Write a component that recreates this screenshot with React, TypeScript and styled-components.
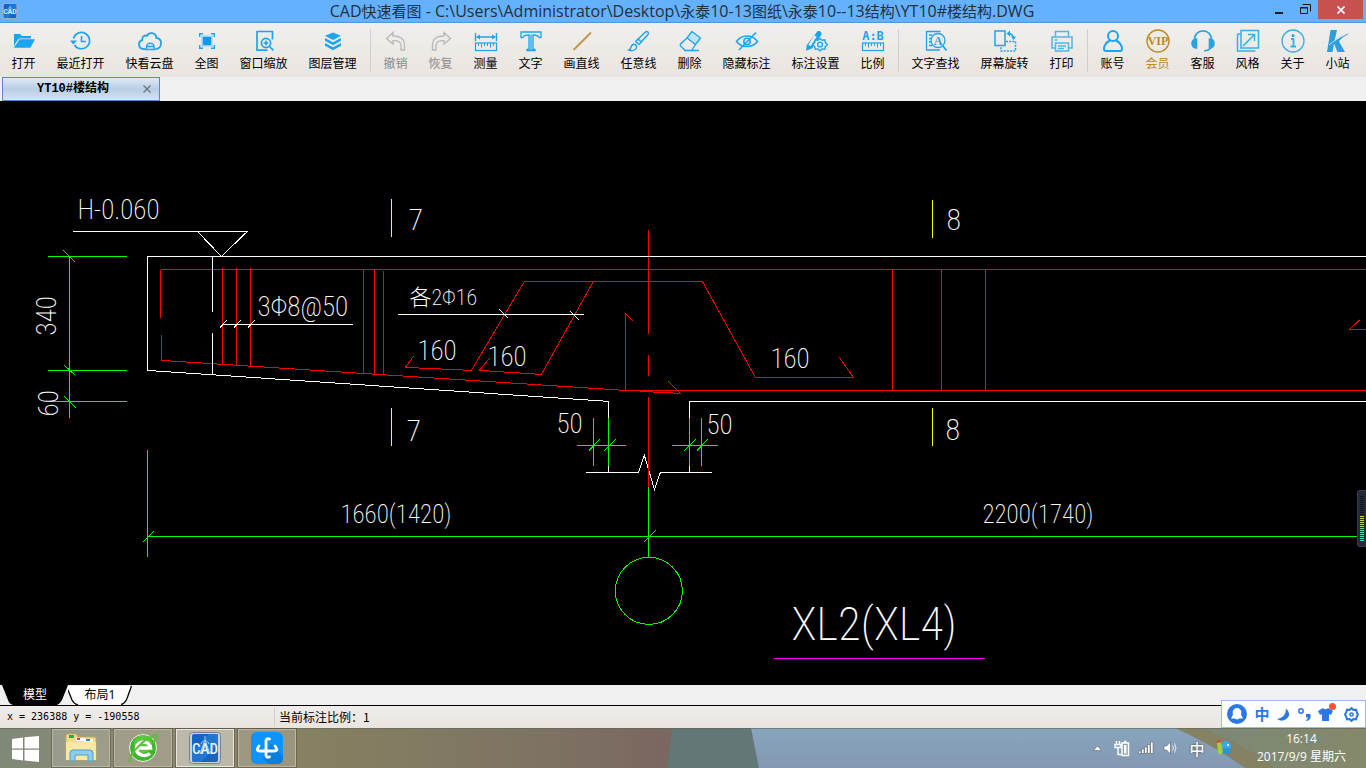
import React from 'react';
import styled, { createGlobalStyle } from 'styled-components';

const BLUE = '#1ba5ee';
const GOLD = '#c08a22';
const CJK = "'Noto Sans CJK SC', sans-serif";

const GlobalStyle = createGlobalStyle`
  *, *::before, *::after { box-sizing: border-box; }
  body { margin: 0; font-family: ${CJK}; font-size: 12px; color: #000; }
  button { margin: 0; padding: 0; border: 0; background: none; color: inherit; font: inherit; cursor: pointer; }
`;

const Desktop = styled.div`
  position: relative;
  display: flex;
  flex-direction: column;
  min-height: 100vh;
  overflow: hidden;
`;

/* ---------- title bar ---------- */

const TitleBar = styled.header`
  display: flex;
  justify-content: space-between;
  height: 23px;
  padding: 0 3px 0 2px;
  background: #64b1ff;
  border-bottom: 1px solid #4b97de;
`;

const TitleSide = styled.div`
  flex: 0 0 96px;
  display: flex;
  padding-top: 3px;
`;

const WindowControls = styled(TitleSide)`
  padding: 0;
  justify-content: flex-end;
`;

const Title = styled.h1`
  flex: 1;
  margin: 0;
  font-family: 'Open Sans', ${CJK};
  font-size: 16px;
  font-weight: 400;
  line-height: 22px;
  text-align: center;
  white-space: nowrap;
  color: #22303c;
`;

const Han = styled.span`
  font-size: 15px;
`;

const WindowButton = styled.button<{ $close?: boolean }>`
  width: ${p => (p.$close ? 45 : 26)}px;
  height: 19px;
  display: flex;
  align-items: center;
  justify-content: center;
  background: ${p => (p.$close ? '#c75050' : 'transparent')};
`;

/* ---------- toolbar ---------- */

const Toolbar = styled.nav`
  display: flex;
  height: 54px;
  padding: 6px 0 0 1px;
  background: linear-gradient(#f0efec, #eae4e0);
`;

const widths: Record<number, number> = { 2: 45, 3: 57, 4: 69 };

const ToolButton = styled.button<{ $chars: number; $color?: string }>`
  flex: 0 0 ${p => widths[p.$chars]}px;
  display: flex;
  flex-direction: column;
  align-items: center;
  align-self: flex-start;
  gap: 2px;
  color: ${p => p.$color || '#000'};
  line-height: 16px;
  white-space: nowrap;
`;

const Separator = styled.i`
  width: 1px;
  height: 43px;
  margin: 0 2px 0 3px;
  background: #cfcfd0;
`;

/* ---------- document tabs ---------- */

const DocTabs = styled.div`
  display: flex;
  height: 24px;
  padding-left: 2px;
  background: #f0f0f0;
`;

const DocTab = styled.div`
  display: flex;
  align-items: center;
  justify-content: space-between;
  width: 158px;
  padding: 0 7px 0 34px;
  border: 1px solid #5d87bf;
  background: linear-gradient(#dfe9f5, #b9cde5 50%, #d6e2f1);
`;

const DocName = styled.button`
  font-family: 'Liberation Mono', ${CJK};
  font-weight: 700;
  line-height: 22px;
`;

const CloseTab = styled.button`
  width: 10px;
  height: 10px;
  display: flex;
`;

/* ---------- drawing area ---------- */

const Canvas = styled.main`
  position: relative;
  flex: 1;
  display: flex;
  min-height: 584px;
  background: #000;
`;

const Drawing = styled.svg`
  flex: 1;
  width: 100%;
  fill: none;
  stroke-width: 1;
`;

const CadText = styled.text<{ $size?: number }>`
  font-family: 'Roboto Condensed', 'Noto Sans CJK SC', sans-serif;
  font-weight: 200;
  font-size: ${p => p.$size || 27}px;
  fill: #fff;
`;

const Gadget = styled.div`
  position: absolute;
  right: 0;
  top: 389px;
  width: 9px;
  height: 57px;
  padding: 5px 2px;
  border: 1px solid #353b4c;
  border-right: 0;
  border-radius: 3px 0 0 3px;
  background: #262a36;
`;

const MeterBars = styled.svg`
  display: block;
  width: 4px;
  height: 46px;
`;

/* ---------- sheet tabs and status ---------- */

const SheetTabs = styled.div`
  display: flex;
  height: 21px;
  padding-left: 2px;
  background: #f0f0f0;
  border-bottom: 1px solid #000;
`;

const SheetTab = styled.button<{ $active?: boolean }>`
  position: relative;
  width: ${p => (p.$active ? 66 : 64)}px;
  height: 20px;
  line-height: 18px;
  color: ${p => (p.$active ? '#fff' : '#000')};
  font-family: 'Noto Sans', ${CJK};
`;

const SheetShape = styled.svg`
  position: absolute;
  left: 0;
  top: 0;
`;

const SheetName = styled.span`
  position: relative;
`;

const StatusBar = styled.footer`
  display: flex;
  align-items: center;
  height: 22px;
  padding-left: 7px;
  background: linear-gradient(#eeedea, #eae4e0);
  line-height: 20px;
`;

const Coordinates = styled.span`
  width: 267px;
  font-family: 'DejaVu Sans Mono', monospace;
  font-size: 10px;
`;

const Scale = styled.span`
  padding-left: 4px;
  border-left: 1px solid #cfcfcf;
`;

/* ---------- taskbar ---------- */

const Taskbar = styled.div`
  position: relative;
  display: flex;
  align-items: center;
  height: 40px;
  overflow: hidden;
`;

const Wallpaper = styled.svg`
  position: absolute;
  inset: 0;
  width: 100%;
  height: 100%;
`;

const StartButton = styled.button`
  position: relative;
  width: 52px;
  height: 40px;
  padding: 6px 0 0 12px;
  text-align: left;
`;

const Tasks = styled.div`
  position: relative;
  flex: 1;
  display: flex;
  gap: 4px;
`;

const TaskButton = styled.button<{ $active?: boolean }>`
  display: flex;
  align-items: center;
  justify-content: center;
  width: 58px;
  height: 38px;
  border: 1px solid ${p => (p.$active ? '#e9e8e2' : '#bbb7a6')};
  outline: 1px solid rgba(70, 66, 50, 0.45);
  background: ${p => (p.$active ? 'rgba(255,255,255,0.42)' : 'rgba(255,255,255,0.16)')};
`;

const Tray = styled.div`
  position: relative;
  display: flex;
  align-items: center;
  gap: 4px;
  padding-right: 20px;
  color: #fff;
`;

const TrayButton = styled.button`
  display: flex;
  align-items: center;
  justify-content: center;
  width: 20px;
  height: 24px;
`;

const ImeMode = styled(TrayButton)`
  width: 26px;
  font-size: 15px;
  font-weight: 500;
  text-shadow: 0 0 2px #333;
`;

const Clock = styled.button`
  margin-left: 19px;
  font-family: 'Open Sans', ${CJK};
  line-height: 18px;
  text-align: center;
  white-space: nowrap;
`;

const ImeBar = styled.div`
  position: absolute;
  right: 0;
  bottom: 40px;
  display: flex;
  align-items: center;
  justify-content: space-between;
  width: 145px;
  height: 28px;
  padding: 0 6px 0 5px;
  border: 1px solid #9bbbe8;
  background: #fff;
  color: #2b78e4;
`;

const ImeButton = styled.button`
  display: flex;
  align-items: center;
  justify-content: center;
  height: 22px;
  font-size: 15px;
  font-weight: 700;
  line-height: 20px;
`;

/* ---------- icons ---------- */

type IconProps = { children: React.ReactNode; color?: string; width?: number };

const Icon = ({ children, color = BLUE, width = 1.4 }: IconProps) => (
  <svg width="24" height="24" viewBox="0 0 24 24" fill="none" stroke={color} strokeWidth={width} aria-hidden="true">
    {children}
  </svg>
);

const Ruler = ({ y }: { y: number }) => (
  <>
    <rect x="1.5" y={y} width="21" height="7.5" strokeWidth="1.2" />
    <path d={`M4.5 ${y}v3M7.5 ${y}v4.500M10.500 ${y}v3M13.500 ${y}v3M16.500 ${y}v4.500M19.500 ${y}v3`} strokeWidth="1" />
  </>
);

const icons: Record<string, React.ReactNode> = {
  open: (
    <Icon>
      <path d="M2 5h6l2 2h9v2.500H7L3.500 14 2 18z" fill={BLUE} stroke="none" />
      <path d="M7.500 10.300H23L18.500 18.800H2z" fill={BLUE} stroke="none" />
    </Icon>
  ),
  recent: (
    <Icon width={1.6}>
      <path d="M4.500 9.500A8.200 8.200 0 1 1 5.500 16M12.500 7v5.500h4.500" />
      <path d="M1 11.500h7L4.300 15.500z" fill={BLUE} stroke="none" />
    </Icon>
  ),
  cloud: (
    <Icon width={1.8}>
      <path d="M7 20H5.500A4.500 4.500 0 0 1 4.200 11.200 C3.800 8 6.500 5.800 9 6.800 C11 2.500 18 3.500 18.300 8.800 C21.500 9 23.200 11.500 23 14.500 C22.800 17.800 20.500 20 17.500 20" />
      <path d="M8.500 20.500v-2.500a3.800 3.800 0 0 1 7.600 0v2.500M8.500 17.500h7.600M7 20.500h10.500" strokeWidth="1.400" />
    </Icon>
  ),
  full: (
    <Icon>
      <rect x="6.500" y="6.500" width="11" height="11" fill="#8ed2f7" stroke="none" />
      <rect x="8" y="8" width="8" height="8" fill="#1199ee" stroke="none" />
      <path d="M4.700 8V4.700H8M16 4.700h3.300V8M19.300 16v3.300H16M8 19.300H4.700V16" />
    </Icon>
  ),
  windowZoom: (
    <Icon width={1.7}>
      <path d="M15.500 21.200H5V2.500h15.500v8" />
      <circle cx="14" cy="14" r="4.600" />
      <path d="M17.500 17.500l4 3.800M11.700 14h4.600M14 11.700v4.600" />
    </Icon>
  ),
  layers: (
    <Icon>
      <path d="M12 3.500l8 3.200-8 4.300-8-4.300zM4 9l8 4.300L20 9v2.800l-8 4.400-8-4.400zM4 14l8 4.300 8-4.300v2.800l-8 4.400-8-4.400z" fill={BLUE} stroke="none" />
    </Icon>
  ),
  undo: (
    <Icon color="#b9b9b9" width={1.3}>
      <path d="M9 3.500L2.500 9.500 9 15v-3.300c5-.5 7.500 1.500 8 4.300v5h3.500v-6c-.5-5.500-5-8-11.500-8z" />
    </Icon>
  ),
  redo: (
    <Icon color="#b9b9b9" width={1.3}>
      <path d="M15 3.500l6.500 6L15 15v-3.300c-5-.5-7.500 1.500-8 4.300v5H3.500v-6c.5-5.500 5-8 11.500-8z" />
    </Icon>
  ),
  measure: (
    <Icon>
      <path d="M1.500 4v8M22.500 4v8M3 8h18" />
      <path d="M2 8l4-2.500v5zM22 8l-4-2.500v5z" fill={BLUE} stroke="none" />
      <Ruler y={14} />
    </Icon>
  ),
  text: (
    <Icon width={1.3}>
      <path d="M2 3h20v5.500h-1.800C19.500 6.300 17 6 14 6v14.500h2v1H8v-1h2V6C7 6 4.500 6.300 3.800 8.500H2zM12 5.500v15.500" />
    </Icon>
  ),
  line: (
    <Icon color="#c29a45" width={2}>
      <path d="M3.500 21L21 3.500" />
    </Icon>
  ),
  brush: (
    <Icon width={1.5}>
      <path d="M8.500 12.500L18.500 3c1.500-1.500 4 .8 2.500 2.500L12 15.500M8.500 12.500l3.500 3M11 10l3.500 3" />
      <path d="M2 21c2.500-1 1.500-4.500 4-5.500 2.500-.8 4.300 1.500 3.300 3.500C8 21.700 4.500 22 2 21z" />
    </Icon>
  ),
  erase: (
    <Icon width={1.3}>
      <path d="M14 2.500l8.500 6.500-5 6.500-8.500-6.500z" fill="#bfe3f8" />
      <path d="M9 9L2.500 15c-.8 1 0 2 1 3l4 3.500h6l4-6M6 21.500h15" />
    </Icon>
  ),
  hide: (
    <Icon width={1.6}>
      <path d="M1.500 12.500C6.500 5.500 17 5 22.500 12.500 17 19.500 6.500 19 1.500 12.500zM21 3.500L4 21" />
      <circle cx="12" cy="12.500" r="3.200" />
    </Icon>
  ),
  settings: (
    <Icon width={1.4}>
      <path d="M12.500 3.500c2-3 6-1 4.800 2.500L8 19.500l-6 2.300.8-5.800z" fill={BLUE} stroke="none" />
      <path d="M11.500 7L5.500 16.500" stroke="#efeeeb" strokeWidth="2.800" />
      <path d="M16 9.500l2 1.800 2.800-.5.500 2.800 2 2-2 2-.5 2.700-2.800-.4-2 1.800-2-1.800-2.800.4-.5-2.700-2-2 2-2 .5-2.800 2.800.5z" fill="#efeeeb" />
      <circle cx="16" cy="15.500" r="2.400" />
    </Icon>
  ),
  ratio: (
    <Icon>
      <text x="12" y="11" textAnchor="middle" fontSize="12" fontWeight="700" fontFamily="'DejaVu Sans Mono', monospace" fill={BLUE} stroke="none">A:B</text>
      <Ruler y={14} />
    </Icon>
  ),
  find: (
    <Icon width={1.3}>
      <path d="M16 21H2.500V2.500h14M5 6h3M5 9.500h2M5 13h2M5 16.500h3" />
      <circle cx="14" cy="11.500" r="7" />
      <path d="M19 17l3.500 4.500" strokeWidth="1.800" />
      <text x="14" y="15.500" textAnchor="middle" fontSize="12" fontWeight="700" fontFamily="'Liberation Serif', serif" fill={BLUE} stroke="none">A</text>
    </Icon>
  ),
  rotate: (
    <Icon width={1.5}>
      <rect x="2" y="2" width="10" height="14.500" />
      <path d="M13 12.500h9.500v9.500H8v-5" strokeDasharray="2 1.200" />
      <path d="M15 4.500c3 0 5 1.500 5.500 4.500" />
      <path d="M13.500 4.500l3.500-3v6zM18 7.500h5l-2.500 3.500z" fill={BLUE} stroke="none" />
    </Icon>
  ),
  print: (
    <Icon color="#4db6ea" width={1.5}>
      <path d="M5.500 8V2.500h13V8M5.500 19H2V8h20v11h-3.500M4.500 11h3" />
      <path d="M5.500 14h13v8h-13zM8 17h8M8 19.500h6" />
    </Icon>
  ),
  account: (
    <Icon width={2}>
      <circle cx="12" cy="7" r="5" />
      <path d="M9 11.500c-4 2-6 5-6 8.500 0 1.500.8 2 2 2h14c1.200 0 2-.5 2-2 0-3.500-2-6.500-6-8.500" />
    </Icon>
  ),
  vip: (
    <Icon color={GOLD} width={1.4}>
      <circle cx="12" cy="12" r="11" />
      <text x="12" y="16" textAnchor="middle" fontSize="12" fontWeight="700" fontFamily="'Liberation Serif', serif" fill={GOLD} stroke="none">VIP</text>
    </Icon>
  ),
  service: (
    <Icon color="#2aa3e0" width={1.6}>
      <path d="M3.500 12C2.500-1.500 21.500-1.500 20.500 12M20 18c-1 3-3.500 3.700-7 3.700" />
      <path d="M5.500 10v9C-.5 19-.5 10 5.500 10zM18.500 10v9c6 0 6-9 0-9z" fill="#2aa3e0" />
    </Icon>
  ),
  style: (
    <Icon color="#3aaee6" width={1.5}>
      <path d="M5 1.500h17.500v17.500H5zM1.500 5v17h18M5 5H1.500M7 17L18.500 5.500M12 5.500h6.500v6.500" />
    </Icon>
  ),
  about: (
    <Icon color="#3aaee6" width={1.3}>
      <circle cx="12" cy="12" r="11" />
      <circle cx="12" cy="6.500" r="1.500" fill="#2a9fdf" stroke="none" />
      <path d="M10 10h2.500v7M9.500 17.500h5.500" strokeWidth="1.800" />
    </Icon>
  ),
  site: (
    <Icon>
      <path d="M4.500 1H11L8.500 12C13 9 17 5.500 23.500 4.500 17 8 14 10.500 13 12.500L19 23h-7.500L8 14.500 6.500 23H1z" fill="#2b9fe0" stroke="none" />
      <path d="M3 16C8 12 12 8.500 19 6" stroke="#dff1fb" strokeWidth="0.800" />
    </Icon>
  ),
};

type Tool = { icon: string; label: string; color?: string };

const toolGroups: Tool[][] = [
  [
    { icon: 'open', label: '打开' },
    { icon: 'recent', label: '最近打开' },
    { icon: 'cloud', label: '快看云盘' },
    { icon: 'full', label: '全图' },
    { icon: 'windowZoom', label: '窗口缩放' },
    { icon: 'layers', label: '图层管理' },
  ],
  [
    { icon: 'undo', label: '撤销', color: '#8b8b8b' },
    { icon: 'redo', label: '恢复', color: '#8b8b8b' },
    { icon: 'measure', label: '测量' },
    { icon: 'text', label: '文字' },
    { icon: 'line', label: '画直线' },
    { icon: 'brush', label: '任意线' },
    { icon: 'erase', label: '删除' },
    { icon: 'hide', label: '隐藏标注' },
    { icon: 'settings', label: '标注设置' },
    { icon: 'ratio', label: '比例' },
  ],
  [
    { icon: 'find', label: '文字查找' },
    { icon: 'rotate', label: '屏幕旋转' },
    { icon: 'print', label: '打印' },
  ],
  [
    { icon: 'account', label: '账号' },
    { icon: 'vip', label: '会员', color: GOLD },
    { icon: 'service', label: '客服' },
    { icon: 'style', label: '风格' },
    { icon: 'about', label: '关于' },
    { icon: 'site', label: '小站' },
  ],
];

const CadLogo = ({ size }: { size: number }) => (
  <svg width={size} height={size} viewBox="0 0 32 32" aria-hidden="true">
    <rect x="0.500" y="0.500" width="31" height="31" rx="3" fill="#c9d0d6" stroke="#7b848c" />
    <rect x="3" y="2" width="26" height="28" rx="2" fill="#1565c4" />
    <path d="M3 20L20 2h9v10L12 30H3z" fill="#2b82dc" opacity="0.600" />
    <path d="M11 22l5-14 5 14M16 4v5M12 12c1-4 7-4 8 0" fill="none" stroke="#a9cdf2" />
    <text x="16" y="22" textAnchor="middle" fontSize="15" fontFamily="'Roboto Condensed', sans-serif" fontWeight="500" fill="#e8f2fc">CAD</text>
  </svg>
);

/* ---------- CAD drawing data ---------- */

const EDGE = 8000;

const strokes: { color: string; d: string }[] = [
  {
    color: '#ff0000',
    d: `M161 269H${EDGE}M160 270V318M161 335V360L625 390M640 391L680 393L668 381
      M222 268V364M236 268V365M250 268V366M363 269V373M374 269V374M383 271V374
      M413 356L405 367L471 370L524 281H702L755 377H853L839 357
      M489 358L479 370L541 374L593 281M633 321L625 313V390H${EDGE}
      M648 230V334M648 355V376M892 269V390M941 269V390M985 269V390
      M1360 319L1349 329H${EDGE}`,
  },
  {
    color: '#ffffff',
    d: `M73 231H247L221 256L197 231M${EDGE} 256H147V370L608 401V472M${EDGE} 401H689V472
      M212 256V312M212 333V374M586 472H638L644 455L654 489L660 472H712
      M222 324H353M219 328L226 320M233 328L240 320M247 328L254 320
      M398 314H584M499 309L508 318M570 311L579 320`,
  },
  { color: '#ff0000', d: 'M648 397V487' },
  {
    color: '#00ff00',
    d: `M69 256V418M48 256H127M48 370H127M51 401H127M63 250L75 262M64 365L75 375M64 396L76 408
      M593 418V466M608 418V466M577 445H626M588 451L599 439M603 451L615 439
      M689 418V466M701 418V466M672 445H718M683 451L695 439M696 451L707 439
      M648 487V557M147 450V557M147 536H${EDGE}M142 542L153 531M643 542L655 530`,
  },
  { color: '#ffff00', d: 'M391 199V237M391 408V446M932 200V238M932 408V446' },
  { color: '#ff00ff', d: 'M774 658H985' },
];

const labels: { x: number; y: number; text: string; size?: number; turned?: boolean }[] = [
  { x: 77, y: 219, text: 'H-0.060' },
  { x: 408, y: 230, text: '7', size: 30 },
  { x: 946, y: 230, text: '8', size: 30 },
  { x: 56, y: 335, text: '340', turned: true },
  { x: 58, y: 416, text: '60', turned: true },
  { x: 257, y: 316, text: '3Φ8@50' },
  { x: 409, y: 305, text: '各2Φ16', size: 22 },
  { x: 417, y: 360, text: '160' },
  { x: 487, y: 366, text: '160' },
  { x: 770, y: 368, text: '160' },
  { x: 556, y: 433, text: '50' },
  { x: 706, y: 434, text: '50' },
  { x: 406, y: 441, text: '7', size: 30 },
  { x: 945, y: 440, text: '8', size: 30 },
  { x: 340, y: 523, text: '1660(1420)' , size: 25 },
  { x: 982, y: 523, text: '2200(1740)', size: 25 },
  { x: 791, y: 640, text: 'XL2(XL4)', size: 47 },
];

const titleParts = 'CAD快速看图 - C:\\Users\\Administrator\\Desktop\\永泰10-13图纸\\永泰10--13结构\\YT10#楼结构.DWG'.split(/([\u4e00-\u9fff]+)/);

const meterColors = [
  ...Array(10).fill('#15171e'),
  '#d8c93c', '#d3cd42', '#c6d14c', '#b4d658', '#a0d965', '#8bdb74', '#76db85', '#62da96', '#50d8a6', '#42d6b2', '#38d3bc', '#31d0c4', '#2ecdc8',
];

export default function App() {
  return (
    <Desktop>
      <GlobalStyle />
      <TitleBar>
        <TitleSide><CadLogo size={16} /></TitleSide>
        <Title>{titleParts.map((part, i) => (i % 2 ? <Han key={i}>{part}</Han> : part))}</Title>
        <WindowControls>
          <WindowButton aria-label="最小化">
            <svg width="10" height="12" aria-hidden="true"><path d="M1 9h8" stroke="#1b1b1b" strokeWidth="2" /></svg>
          </WindowButton>
          <WindowButton aria-label="还原">
            <svg width="11" height="11" fill="none" stroke="#1b1b1b" aria-hidden="true"><path d="M0.500 3.500h7v6h-7zM0 4h8M2.500 0.500h8v7" /></svg>
          </WindowButton>
          <WindowButton $close aria-label="关闭">
            <svg width="8" height="8" aria-hidden="true"><path d="M0.500 0.500l7 7M7.500 0.500l-7 7" stroke="#fff" strokeWidth="1.700" /></svg>
          </WindowButton>
        </WindowControls>
      </TitleBar>

      <Toolbar>
        {toolGroups.map((group, g) => (
          <React.Fragment key={g}>
            {g > 0 && <Separator />}
            {group.map(tool => (
              <ToolButton key={tool.label} $chars={tool.label.length} $color={tool.color}>
                {icons[tool.icon]}
                {tool.label}
              </ToolButton>
            ))}
          </React.Fragment>
        ))}
      </Toolbar>

      <DocTabs>
        <DocTab>
          <DocName>YT10#楼结构</DocName>
          <CloseTab aria-label="关闭图纸">
            <svg width="10" height="10" aria-hidden="true"><path d="M1.500 1.500l7 7M8.500 1.500l-7 7" stroke="#6b7684" strokeWidth="1.300" /></svg>
          </CloseTab>
        </DocTab>
      </DocTabs>

      <Canvas>
        <Drawing>
          <g transform="translate(0.4 -100.6)">
            <g shapeRendering="crispEdges">
              {strokes.map((s, i) => <path key={i} d={s.d} stroke={s.color} />)}
              <circle cx="648.500" cy="590.500" r="33.500" stroke="#00ff00" />
            </g>
            {labels.map((l, i) => (
              <CadText key={i} $size={l.size} transform={`translate(${l.x} ${l.y})${l.turned ? ' rotate(-90)' : ''}`}>
                {l.text}
              </CadText>
            ))}
          </g>
        </Drawing>
        <Gadget>
          <MeterBars aria-hidden="true">
            {meterColors.map((color, i) => <rect key={i} y={i * 2} width="4" height="1" fill={color} />)}
          </MeterBars>
        </Gadget>
      </Canvas>

      <SheetTabs>
        <SheetTab $active>
          <SheetShape width="66" height="20" aria-hidden="true"><path d="M0 0h66l-6 15q-2 4-5 5H11q-4-1-5-5z" fill="#000" /></SheetShape>
          <SheetName>模型</SheetName>
        </SheetTab>
        <SheetTab>
          <SheetShape width="64" height="20" aria-hidden="true">
            <path d="M0 2l4 12q2 5 6 5.500h43q4-1 6-6L63 1H0z" fill="#fff" />
            <path d="M0 5l4 10q2 4 6 5M53 19.500q4-1 6-6L63.500 1" fill="none" stroke="#000" strokeWidth="1.300" />
          </SheetShape>
          <SheetName>布局1</SheetName>
        </SheetTab>
      </SheetTabs>

      <StatusBar>
        <Coordinates>x = 236388 y = -190558</Coordinates>
        <Scale>当前标注比例：1</Scale>
      </StatusBar>

      <Taskbar>
        <Wallpaper viewBox="0 0 1366 40" preserveAspectRatio="none" aria-hidden="true">
          <defs>
            <linearGradient id="field">
              <stop offset="0" stopColor="#7f8878" />
              <stop offset="0.200" stopColor="#8f8b73" />
              <stop offset="0.500" stopColor="#857f61" />
              <stop offset="0.820" stopColor="#7d7263" />
              <stop offset="1" stopColor="#7b6660" />
            </linearGradient>
            <linearGradient id="sky" x2="0" y2="1">
              <stop offset="0" stopColor="#88a5bd" />
              <stop offset="1" stopColor="#8498b3" />
            </linearGradient>
            <linearGradient id="grass">
              <stop offset="0" stopColor="#7c8878" />
              <stop offset="1" stopColor="#85896a" />
            </linearGradient>
          </defs>
          <rect width="673" height="40" fill="url(#field)" />
          <path d="M672 0h80l8 40h-93z" fill="#647777" />
          <path d="M751 0h430l90 40H759z" fill="url(#sky)" />
          <path d="M1190 0h176v40h-110z" fill="url(#grass)" />
          <path d="M1175 0h25q45 16 75 40h-30Q1215 18 1175 0z" fill="#858163" />
          <rect width="1366" height="1" fill="#5f6658" opacity="0.600" />
        </Wallpaper>
        <StartButton aria-label="开始">
          <svg width="27" height="27" viewBox="0 0 27 27" fill="#fff" aria-hidden="true">
            <path d="M0 3l11-1.500v11H0zM12.500 1.200L27 0v12.500H12.500zM0 13.700h11v10.800L0 23zM12.500 13.700H27V26l-14.500-1.500z" />
          </svg>
        </StartButton>
        <Tasks>
          <TaskButton aria-label="文件资源管理器">
            <svg width="34" height="30" viewBox="0 0 34 30" aria-hidden="true">
              <path d="M2 3q0-2 2-2h8l2 3h16q2 0 2 2v21H2z" fill="#f3d983" stroke="#caa94f" strokeWidth="0.800" />
              <path d="M5 2h5v3H5z" fill="#2ba84a" /><path d="M12 5h9v3h-9z" fill="#fff" /><path d="M13 5h3v2h-3z" fill="#d9432f" />
              <path d="M20 6h9v3h-9z" fill="#fff" /><path d="M22 6h4v2h-4z" fill="#2f86d8" />
              <path d="M2 9h30v18H2z" fill="#f9e7a4" />
              <path d="M6 28V20q0-3 3-3h17q3 0 3 3v8h-5v-6H11v6z" fill="#8fcdec" stroke="#4c9fc9" />
            </svg>
          </TaskButton>
          <TaskButton aria-label="浏览器">
            <svg width="30" height="30" viewBox="0 0 30 30" aria-hidden="true">
              <circle cx="15" cy="15" r="13.500" fill="#3fb52f" stroke="#e9f7df" />
              <circle cx="15" cy="11" r="9" fill="#72d14c" opacity="0.600" />
              <path d="M22 20.500c-5 4-14 1.500-13.500-5.500.5-7.500 13-8.500 14 0H9" fill="none" stroke="#fff" strokeWidth="3.500" />
              <path d="M2 29C0 23 15 5 29 1.500 28.500 6 26 9 25 10" fill="none" stroke="#5cbf38" strokeWidth="2" />
            </svg>
          </TaskButton>
          <TaskButton $active aria-label="CAD快速看图"><CadLogo size={32} /></TaskButton>
          <TaskButton aria-label="助手">
            <svg width="32" height="32" viewBox="0 0 32 32" aria-hidden="true">
              <rect width="32" height="32" rx="6" fill="#0f93f8" />
              <path d="M20 12l12 12v2q0 6-6 6h-8l-6-6z" fill="#0a7fdc" />
              <path d="M18.500 7q-3.500-1-3.500 2v14q0 3 3.500 2M8 14q-4 5 1 5h14q5 0 1-5" fill="none" stroke="#fff" strokeWidth="2.800" strokeLinecap="round" />
            </svg>
          </TaskButton>
        </Tasks>
        <Tray>
          <TrayButton aria-label="显示隐藏的图标">
            <svg width="9" height="6" aria-hidden="true"><path d="M0.500 5.500L4.500 1l4 4.500z" fill="#fff" stroke="#555" strokeWidth="0.500" /></svg>
          </TrayButton>
          <TrayButton aria-label="电源">
            <svg width="16" height="17" fill="none" stroke="#fff" aria-hidden="true">
              <path d="M2.500 1v3M5.500 1v3M1 4.500h6v3H1zM4 8v6.500h3" strokeWidth="1.400" />
              <path d="M8 3h6.500v12.500H8zM10 1.500h2.500" strokeWidth="1.500" /><path d="M10 5h2.500v8.500H10z" fill="#fff" stroke="none" />
            </svg>
          </TrayButton>
          <TrayButton aria-label="网络">
            <svg width="16" height="14" fill="#fff" stroke="#454d55" strokeWidth="0.500" aria-hidden="true"><path d="M0.500 10h2.500v2.500h-2.500zM3.500 8h2.500v4.500h-2.500zM6.500 6h2.500v6.500h-2.500zM9.500 3.500h2.500v9h-2.500zM12.500 1h2.500v11.500h-2.500z" /></svg>
          </TrayButton>
          <TrayButton aria-label="音量">
            <svg width="14" height="14" aria-hidden="true"><path d="M1 5h2.500L7.500 1v12l-4-4H1z" fill="#fff" stroke="#454d55" strokeWidth="0.500" /><path d="M9.500 4.500q2 2.500 0 5M11.500 2.500q3 4.500 0 9" fill="none" stroke="#e8ecee" /></svg>
          </TrayButton>
          <ImeMode>中</ImeMode>
          <TrayButton aria-label="输入法">
            <svg width="16" height="16" aria-hidden="true">
              <circle cx="10" cy="6" r="5" fill="#38a8e8" /><path d="M5 8h9l1 6H6z" fill="#2a94d8" />
              <path d="M1 3l4-1 2 10-2 3-3-2z" fill="#a4cf3c" /><path d="M1 3l4-1-.5-2-3 .5z" fill="#e1442e" /><circle cx="12" cy="5" r="1" fill="#fff" />
            </svg>
          </TrayButton>
          <Clock>16:14<br />2017/9/9 星期六</Clock>
        </Tray>
      </Taskbar>

      <ImeBar>
        <ImeButton aria-label="用户">
          <svg width="20" height="20" aria-hidden="true"><circle cx="10" cy="10" r="10" fill="#2b78e4" /><path d="M10 4a4.500 4.500 0 0 1 4 6.500l2 4h-4q-2 2-4 0H4l2-4A4.500 4.500 0 0 1 10 4z" fill="#fff" /></svg>
        </ImeButton>
        <ImeButton>中</ImeButton>
        <ImeButton aria-label="半角">
          <svg width="13" height="13" aria-hidden="true"><path d="M9 0.500q6 5.500 1 10-4.500 4-10 .5Q9 9.500 9 .5z" fill="#2b78e4" /></svg>
        </ImeButton>
        <ImeButton aria-label="标点">
          <svg width="13" height="14" aria-hidden="true"><circle cx="3" cy="4" r="2.200" fill="none" stroke="#2b78e4" strokeWidth="1.500" /><path d="M8 7h4.500v3q0 3-4 4l-.5-1q2-1 2-2.500H8z" fill="#2b78e4" /></svg>
        </ImeButton>
        <ImeButton aria-label="皮肤">
          <svg width="18" height="22" aria-hidden="true"><path d="M0 8l5-3q2.500 2.500 5 0l5 3-2 4-2-1v7H4v-7l-2 1z" fill="#2b78e4" /><circle cx="14.500" cy="3.500" r="3.500" fill="#fb5431" /></svg>
        </ImeButton>
        <ImeButton aria-label="设置">
          <svg width="15" height="15" viewBox="0 0 15 15" fill="none" stroke="#2b78e4" strokeWidth="2" aria-hidden="true"><path d="M7.500 1l1.800 2 2.700-.3.800 2.600L14 7.500l-1.200 2.200-.8 2.600-2.700-.3-1.800 2-1.800-2-2.700.3-.8-2.600L1 7.500l1.200-2.200.8-2.600 2.700.3z" /><circle cx="7.500" cy="7.500" r="1.600" strokeWidth="1.500" /></svg>
        </ImeButton>
      </ImeBar>
    </Desktop>
  );
}
